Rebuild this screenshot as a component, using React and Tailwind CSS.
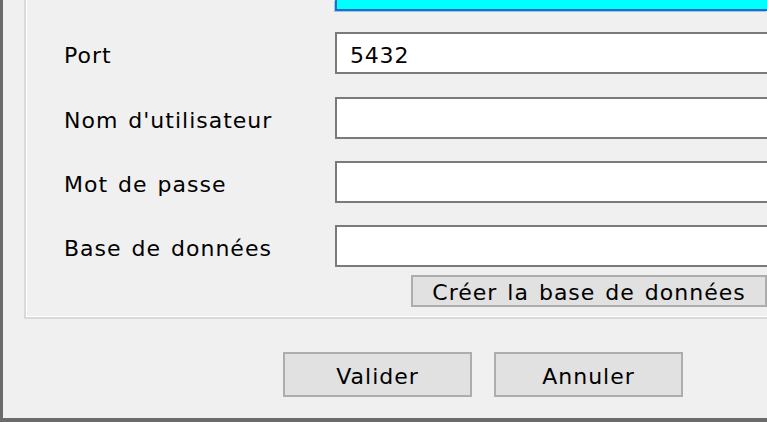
import React from 'react';

const font = { fontFamily: '"DejaVu Sans", Verdana, sans-serif' };

const Field = ({ label, value, className }) => (
  <div className={`grid grid-cols-[271px_1fr] items-center ${className}`}>
    <span className="block pt-[6px] text-[22px] tracking-[1px] [word-spacing:2px] text-black leading-none">{label}</span>
    <div className="h-[42px] bg-white border-2 border-[#7a7a7a] border-r-0 flex items-center pl-[13px] pt-[5px] text-[22px] tracking-[0.8px] text-black leading-none">
      {value}
    </div>
  </div>
);

const Btn = ({ children, className }) => (
  <button
    className={`bg-[#e1e1e1] border-2 border-[#adadad] text-[22px] tracking-[1px] [word-spacing:2px] text-black leading-none flex items-center justify-center pt-[4px] ${className}`}
  >
    {children}
  </button>
);

export default function App() {
  return (
    <div
      className="w-[767px] h-[422px] bg-[#f0f0f0] border-l-[3px] border-b-4 border-[#6b6b6b] overflow-hidden"
      style={font}
    >
      <div className="ml-[21px] h-[319px] border-l-2 border-b-2 border-[#d9d9d9] shadow-[inset_1px_-1px_0_#ffffff] pl-[38px] flex flex-col">
        <div className="grid grid-cols-[271px_1fr]">
          <span />
          <div className="h-[11px] bg-[#00ffff] border-l-2 border-b-2 border-[#1a6fc4] shadow-[-1px_1px_0_#9cc4ec]" />
        </div>
        <Field label="Port" value="5432" className="mt-[21px]" />
        <Field label="Nom d'utilisateur" className="mt-[23px]" />
        <Field label="Mot de passe" className="mt-[22px]" />
        <Field label="Base de données" className="mt-[22px]" />
        <div className="flex mt-[8px] pl-[347px]">
          <Btn className="w-[356px] h-[32px]">Créer la base de données</Btn>
        </div>
      </div>
      <div className="flex gap-[22px] pl-[280px] mt-[33px]">
        <Btn className="w-[189px] h-[45px]">Valider</Btn>
        <Btn className="w-[189px] h-[45px]">Annuler</Btn>
      </div>
    </div>
  );
}
